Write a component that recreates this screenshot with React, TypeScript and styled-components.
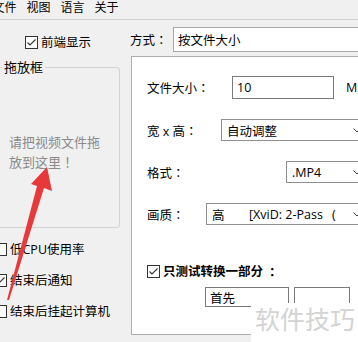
import React from "react";
import styled, { createGlobalStyle } from "styled-components";

const FONT = `"Open Sans", "Noto Sans CJK SC", sans-serif`;

const Global = createGlobalStyle`
  html, body { margin: 0; padding: 0; background: #f0f0f0; }
  body { font-family: ${FONT}; }
  * { box-sizing: border-box; }
`;

const Window = styled.div`
  position: relative;
  width: 358px;
  height: 342px;
  overflow: hidden;
  background: #f0f0f0;
  color: #000;
  font-family: ${FONT};
  font-size: 12.5px;
  display: flex;
  flex-direction: column;
`;

const MenuBar = styled.div`
  flex: none;
  height: 20px;
  display: flex;
  align-items: flex-start;
  border-bottom: 1px solid #cfcfcf;
  margin-left: -12.5px;
  font-size: 12px;
  line-height: 15px;
`;

const MenuItem = styled.span`
  padding: 0 5px;
  white-space: nowrap;
`;

const Body = styled.div`
  flex: 1;
  display: flex;
`;

const LeftCol = styled.div`
  flex: none;
  width: 128px;
  margin-left: -8px;
  display: flex;
  flex-direction: column;
`;

const RightCol = styled.div`
  flex: 1;
  padding-left: 10px;
  display: flex;
  flex-direction: column;
  min-width: 0;
`;

const Punct = styled.span`
  font-family: "Noto Sans CJK TC", "Noto Sans CJK SC", sans-serif;
`;

const C = () => <Punct>：</Punct>;

const CheckRow = styled.label<{ $top: number; $left: number; $bold?: boolean }>`
  display: flex;
  align-items: center;
  gap: 3px;
  height: 13px;
  margin-top: ${(p) => p.$top}px;
  margin-left: ${(p) => p.$left}px;
  font-weight: ${(p) => (p.$bold ? 700 : 400)};
  white-space: nowrap;
  line-height: 13px;
`;

const Box = styled.span`
  flex: none;
  width: 13px;
  height: 13px;
  border: 1px solid #333;
  background: #fff;
  display: flex;
  align-items: center;
  justify-content: center;
`;

const Check: React.FC<{ checked?: boolean }> = ({ checked }) => (
  <Box>
    {checked && (
      <svg width="11" height="11" viewBox="0 0 11 11">
        <polyline points="1.5,5.5 4,8 9.5,2.5" fill="none" stroke="#333" strokeWidth="1.1" />
      </svg>
    )}
  </Box>
);

const GroupBox = styled.fieldset`
  margin: 10px 0 0 0;
  padding: 0;
  width: 128px;
  height: 169px;
  border: 1px solid #d2d2d2;
  border-radius: 3px;
  min-width: 0;
`;

const GroupTitle = styled.legend`
  margin-left: 9px;
  padding: 0 2px;
  font-size: 13px;
  line-height: 16px;
`;

const DropHint = styled.p`
  margin: 57px 0 0 16px;
  width: 95px;
  font-size: 13px;
  line-height: 20px;
  color: #8a8a8a;
`;

const ModeRow = styled.div`
  margin-top: 7px;
  height: 25px;
  display: flex;
  align-items: center;
`;

const ModeLabel = styled.span`
  width: 43px;
  flex: none;
  white-space: nowrap;
`;

const ComboBox = styled.div`
  flex: none;
  width: 210px;
  height: 25px;
  border: 1px solid #a9a9a9;
  background: #fff;
  display: flex;
  align-items: center;
  padding-left: 4px;
`;

const Panel = styled.div`
  margin: 4px 0 0 1px;
  width: 260px;
  height: 279px;
  flex: none;
  border: 1px solid #adadad;
  background: #fff;
  padding: 19px 0 0 15px;
  display: flex;
  flex-direction: column;
`;

const Field = styled.div<{ $top: number; $h: number }>`
  margin-top: ${(p) => p.$top}px;
  height: ${(p) => p.$h}px;
  display: flex;
  align-items: center;
  flex: none;
`;

const FieldLabel = styled.span<{ $w: number }>`
  width: ${(p) => p.$w}px;
  flex: none;
  white-space: nowrap;
`;

const Edit = styled.div<{ $w: number }>`
  flex: none;
  width: ${(p) => p.$w}px;
  height: 100%;
  border: 1px solid #7a7a7a;
  background: #fff;
  display: flex;
  align-items: center;
  padding-left: 4px;
`;

const Unit = styled.span`
  margin-left: 12px;
`;

const Select = styled.div`
  flex: none;
  width: 160px;
  height: 100%;
  border: 1px solid #8f8f8f;
  background: #fff;
  display: flex;
  align-items: center;
  padding-left: 5px;
  white-space: nowrap;
  position: relative;
`;

const SelectText = styled.span<{ $w?: number }>`
  display: inline-block;
  width: ${(p) => (p.$w ? `${p.$w}px` : "auto")};
`;

const Chevron = styled.svg<{ $x: number }>`
  position: absolute;
  left: ${(p) => p.$x}px;
  top: 50%;
  margin-top: -2px;
`;

const Caret: React.FC<{ x: number }> = ({ x }) => (
  <Chevron $x={x} width="8" height="5" viewBox="0 0 8 5">
    <polyline points="0.5,0.5 4,4 7.5,0.5" fill="none" stroke="#444" strokeWidth="1" />
  </Chevron>
);

const PartRow = styled.div`
  margin-top: 9px;
  margin-left: 58px;
  height: 20px;
  display: flex;
  gap: 5px;
  flex: none;
`;

const SmallEdit = styled.div<{ $w: number }>`
  flex: none;
  width: ${(p) => p.$w}px;
  height: 20px;
  border: 1px solid #7a7a7a;
  background: #fff;
  padding-left: 4px;
  display: flex;
  align-items: center;
`;

const Watermark = styled.div`
  position: absolute;
  left: 251px;
  top: 303px;
  right: 0;
  bottom: 0;
  background: #fff;
  color: #d3d3d3;
  font-size: 25px;
  line-height: 32px;
  padding-left: 4px;
  white-space: nowrap;
`;

const ArrowLayer = styled.svg`
  position: absolute;
  left: 0;
  top: 0;
  pointer-events: none;
`;

export default function App() {
  return (
    <>
      <Global />
      <Window>
        <MenuBar>
          <MenuItem>文件</MenuItem>
          <MenuItem>视图</MenuItem>
          <MenuItem>语言</MenuItem>
          <MenuItem>关于</MenuItem>
        </MenuBar>
        <Body>
          <LeftCol>
            <CheckRow $top={16} $left={33}>
              <Check checked />
              前端显示
            </CheckRow>
            <GroupBox>
              <GroupTitle>拖放框</GroupTitle>
              <DropHint>
                请把视频文件拖放到这里<Punct>！</Punct>
              </DropHint>
            </GroupBox>
            <CheckRow $top={15} $left={2}>
              <Check />
              低CPU使用率
            </CheckRow>
            <CheckRow $top={18} $left={2}>
              <Check checked />
              结束后通知
            </CheckRow>
            <CheckRow $top={18} $left={2}>
              <Check />
              结束后挂起计算机
            </CheckRow>
          </LeftCol>
          <RightCol>
            <ModeRow>
              <ModeLabel>
                方式<C />
              </ModeLabel>
              <ComboBox>按文件大小</ComboBox>
            </ModeRow>
            <Panel>
              <Field $top={0} $h={23}>
                <FieldLabel $w={85}>
                  文件大小<C />
                </FieldLabel>
                <Edit $w={102}>10</Edit>
                <Unit>M</Unit>
              </Field>
              <Field $top={20} $h={22}>
                <FieldLabel $w={74}>
                  宽 x 高<C />
                </FieldLabel>
                <Select>
                  自动调整
                  <Caret x={131} />
                </Select>
              </Field>
              <Field $top={20} $h={22}>
                <FieldLabel $w={139}>
                  格式<C />
                </FieldLabel>
                <Select>
                  .MP4
                  <Caret x={66} />
                </Select>
              </Field>
              <Field $top={20} $h={22}>
                <FieldLabel $w={59}>
                  画质<C />
                </FieldLabel>
                <Select>
                  <SelectText $w={37}>高</SelectText>
                  <SelectText $w={83}>[XviD: 2-Pass</SelectText>
                  <SelectText>(</SelectText>
                  <Caret x={146} />
                </Select>
              </Field>
              <CheckRow $top={40} $left={0} $bold>
                <Check checked />
                只测试转换一部分<C />
              </CheckRow>
              <PartRow>
                <SmallEdit $w={84}>首先</SmallEdit>
                <SmallEdit $w={56} />
              </PartRow>
            </Panel>
          </RightCol>
        </Body>
        <ArrowLayer width="358" height="342" viewBox="0 0 358 342">
          <polygon
            points="47,167 52,191 44,188 9,300 7,300 37,186 31,184"
            fill="#e8393a"
          />
        </ArrowLayer>
        <Watermark>软件技巧</Watermark>
      </Window>
    </>
  );
}
